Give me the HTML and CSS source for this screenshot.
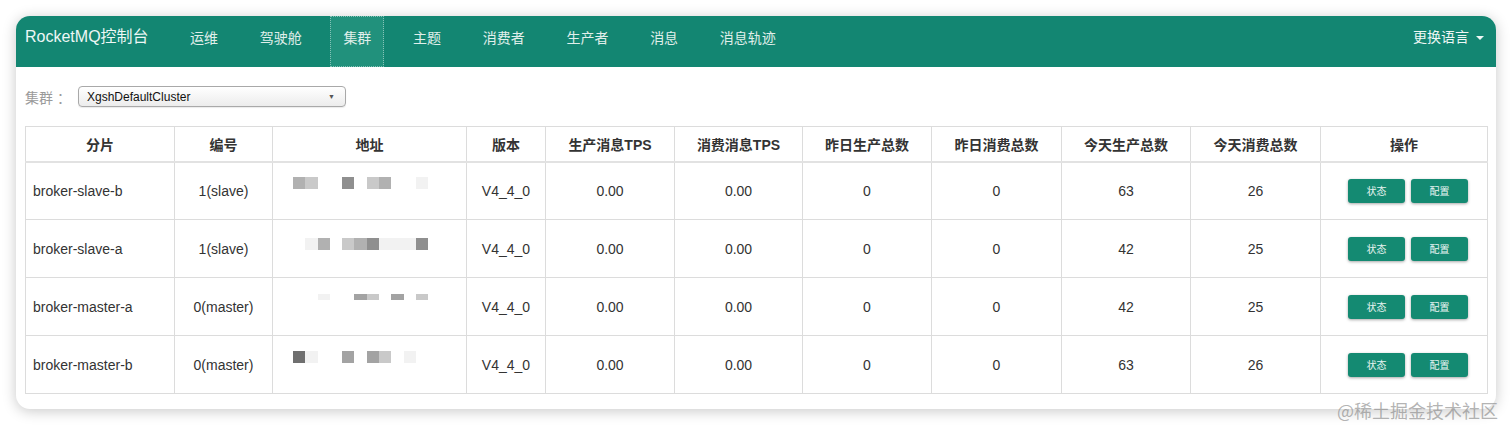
FILE: index.html
```html
<!DOCTYPE html>
<html lang="zh-CN">
<head>
<meta charset="utf-8">
<title>RocketMQ控制台</title>
<link rel="stylesheet" href="styles.css">
</head>
<body>
<div class="window">
  <nav class="navbar">
    <div class="brand">RocketMQ控制台</div>
    <ul class="nav">
      <li><a class="nav-link">运维</a></li>
      <li><a class="nav-link">驾驶舱</a></li>
      <li><a class="nav-link active">集群</a></li>
      <li><a class="nav-link">主题</a></li>
      <li><a class="nav-link">消费者</a></li>
      <li><a class="nav-link">生产者</a></li>
      <li><a class="nav-link">消息</a></li>
      <li><a class="nav-link">消息轨迹</a></li>
    </ul>
    <div class="lang">更换语言 <span class="caret"></span></div>
  </nav>

  <div class="content">
    <div class="filter">
      <label class="filter-label">集群 ：</label>
      <div class="select">
        <span class="select-text">XgshDefaultCluster</span>
        <span class="select-arrow">▼</span>
      </div>
    </div>

    <table class="grid">
      <colgroup>
        <col class="w1"><col class="w2"><col class="w3"><col class="w4"><col class="w5"><col class="w6">
        <col class="w7"><col class="w8"><col class="w9"><col class="w10"><col class="w11">
      </colgroup>
      <thead>
        <tr>
          <th>分片</th><th>编号</th><th>地址</th><th>版本</th><th>生产消息TPS</th><th>消费消息TPS</th>
          <th>昨日生产总数</th><th>昨日消费总数</th><th>今天生产总数</th><th>今天消费总数</th><th>操作</th>
        </tr>
      </thead>
      <tbody>
        <tr>
          <td class="name">broker-slave-b</td>
          <td>1(slave)</td>
          <td class="addr"><div class="blur">
            <i class="k3"></i><i class="k2"></i><i></i><i></i><i class="k5"></i><i></i><i class="k2"></i><i class="k3"></i><i></i><i></i><i class="k1"></i>
          </div></td>
          <td>V4_4_0</td><td>0.00</td><td>0.00</td><td>0</td><td>0</td><td>63</td><td>26</td>
          <td class="ops"><button class="btn">状态</button><button class="btn">配置</button></td>
        </tr>
        <tr>
          <td class="name">broker-slave-a</td>
          <td>1(slave)</td>
          <td class="addr"><div class="blur b2">
            <i></i><i class="k1"></i><i class="k3"></i><i></i><i class="k2"></i><i class="k3"></i><i class="k5"></i><i class="k1"></i><i class="k1"></i><i class="k1"></i><i class="k5"></i>
          </div></td>
          <td>V4_4_0</td><td>0.00</td><td>0.00</td><td>0</td><td>0</td><td>42</td><td>25</td>
          <td class="ops"><button class="btn">状态</button><button class="btn">配置</button></td>
        </tr>
        <tr>
          <td class="name">broker-master-a</td>
          <td>0(master)</td>
          <td class="addr"><div class="blur b3">
            <i></i><i></i><i class="k1"></i><i></i><i></i><i class="k4"></i><i class="k2"></i><i></i><i class="k4"></i><i></i><i class="k2"></i>
          </div></td>
          <td>V4_4_0</td><td>0.00</td><td>0.00</td><td>0</td><td>0</td><td>42</td><td>25</td>
          <td class="ops"><button class="btn">状态</button><button class="btn">配置</button></td>
        </tr>
        <tr>
          <td class="name">broker-master-b</td>
          <td>0(master)</td>
          <td class="addr"><div class="blur b4">
            <i class="k6"></i><i class="k1"></i><i></i><i></i><i class="k4"></i><i></i><i class="k4"></i><i class="k2"></i><i></i><i class="k1"></i><i></i>
          </div></td>
          <td>V4_4_0</td><td>0.00</td><td>0.00</td><td>0</td><td>0</td><td>63</td><td>26</td>
          <td class="ops"><button class="btn">状态</button><button class="btn">配置</button></td>
        </tr>
      </tbody>
    </table>
  </div>
  <div class="watermark">@稀土掘金技术社区</div>
</div>
</body>
</html>
```

FILE: styles.css
```css
* { box-sizing: border-box; }

html, body {
  margin: 0;
  padding: 0;
  background: #ffffff;
  font-family: "Liberation Sans", "Noto Sans CJK SC", sans-serif;
  color: #333;
}

body { padding: 16px; }

.window {
  position: relative;
  width: 1480px;
  height: 393px;
  border-radius: 14px;
  background: #fff;
  box-shadow: 0 2px 14px rgba(0, 0, 0, 0.22);
}

/* navbar */
.navbar {
  display: flex;
  align-items: stretch;
  height: 51px;
  background: #138672;
  border-radius: 14px 14px 0 0;
  color: #e6f2ef;
}

.brand {
  padding: 11px 0 0 9px;
  font-size: 16px;
  line-height: 20px;
  color: #eef7f5;
  width: 161px;
}

.nav {
  display: flex;
  gap: 15.7px;
  list-style: none;
  margin: 0;
  padding: 0;
  flex: 1;
}

.nav-link {
  display: block;
  height: 51px;
  padding: 11px 12px 0;
  font-size: 14px;
  line-height: 20px;
  color: #e0efeb;
  border: 1px solid transparent;
}

.nav-link.active {
  background: #21917c;
  border: 1px dotted rgba(255, 255, 255, 0.45);
}

.lang {
  padding: 11px 12px 0 0;
  font-size: 14px;
  line-height: 20px;
  color: #eef7f5;
}

.caret {
  display: inline-block;
  width: 0;
  height: 0;
  margin-left: 3px;
  vertical-align: middle;
  border-top: 4px solid #eef7f5;
  border-left: 4px solid transparent;
  border-right: 4px solid transparent;
}

/* content */
.content { padding: 19px 9px 0; }

.filter {
  display: flex;
  align-items: center;
  height: 21px;
}

.filter-label {
  width: 53px;
  font-size: 14px;
  color: #9a9a9a;
  white-space: nowrap;
}

.select {
  display: flex;
  align-items: center;
  justify-content: space-between;
  width: 268px;
  height: 21px;
  padding: 0 10px 0 8px;
  border: 1px solid #a9a9a9;
  border-radius: 4px;
  background: linear-gradient(#ffffff, #ececec);
  box-shadow: 0 1px 1px rgba(0, 0, 0, 0.08);
}

.select-text {
  font-size: 12px;
  color: #111;
}

.select-arrow {
  font-size: 7px;
  color: #555;
}

/* table */
.grid {
  margin-top: 19px;
  width: 1462px;
  border-collapse: collapse;
  table-layout: fixed;
  font-size: 14px;
}

.w1 { width: 149px; }
.w2 { width: 98px; }
.w3 { width: 194px; }
.w4 { width: 79px; }
.w5 { width: 129px; }
.w6 { width: 128px; }
.w7 { width: 129px; }
.w8 { width: 130px; }
.w9 { width: 129px; }
.w10 { width: 130px; }
.w11 { width: 167px; }

.grid th,
.grid td {
  border: 1px solid #dcdcdc;
  text-align: center;
  vertical-align: middle;
  padding: 0 8px;
  color: #333;
}

.grid th {
  height: 35px;
  font-weight: bold;
  border-bottom: 2px solid #e2e2e2;
}

.grid td { height: 58px; }

.grid td.name { text-align: left; padding-left: 7px; }

.grid td.addr {
  vertical-align: top;
  padding: 14px 0 0 20px;
}

.blur { display: flex; height: 12px; }
.blur i { display: block; width: 12.3px; height: 100%; }
.blur.b2 { margin-top: 4px; }
.blur.b3 { margin-top: 2px; height: 6px; }
.blur.b4 { margin-top: 1px; }

.k1 { background: #f2f2f2; }
.k2 { background: #c9c9c9; }
.k3 { background: #b1b1b1; }
.k4 { background: #a3a3a3; }
.k5 { background: #8f8f8f; }
.k6 { background: #6f6f6f; }

.ops { padding-left: 16px !important; }

.btn {
  width: 57px;
  height: 24px;
  margin: 0 3px;
  border: none;
  border-radius: 3px;
  background: #148a72;
  color: #e8f4f1;
  font-family: "Noto Sans CJK SC", sans-serif;
  font-size: 10px;
  box-shadow: 0 1px 3px rgba(0, 0, 0, 0.35);
}

.watermark {
  position: absolute;
  right: -2px;
  bottom: -11px;
  font-size: 18px;
  color: rgba(130, 130, 130, 0.6);
  font-family: "Noto Sans CJK SC", sans-serif;
  line-height: 20px;
}
```
